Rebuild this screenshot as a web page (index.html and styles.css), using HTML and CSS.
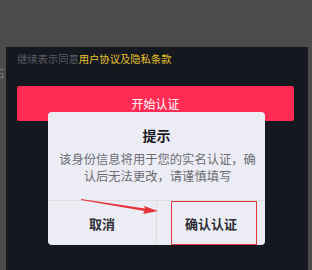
FILE: index.html
```html
<!DOCTYPE html>
<html lang="zh-CN">
<head>
  <meta charset="UTF-8" />
  <title>实名认证</title>
  <link rel="stylesheet" href="styles.css">
</head>
<body>

<div class="page">
  <span class="behind">占</span>

  <!-- bottom sheet -->
  <div class="sheet">
    <div class="agree">继续表示同意<span class="link">用户协议及隐私条款</span></div>
    <button class="btn-start">开始认证</button>
  </div>

  <!-- confirm dialog -->
  <div class="dialog">
    <div class="dialog-title">提示</div>
    <div class="dialog-text">该身份信息将用于您的实名认证，确认后无法更改，请谨慎填写</div>
    <div class="dialog-actions">
      <div class="action">取消</div>
      <div class="action">确认认证</div>
    </div>
  </div>

  <!-- annotation -->
  <div class="mark-box"></div>
  <svg class="mark-arrow" width="80" height="16" viewBox="0 0 80 16">
    <polygon points="0,0 64,9.5 63,7 77,12 62,15 63.5,12 0,1" fill="#e8323a" />
  </svg>
</div>

</body>
</html>
```

FILE: styles.css
```css
* { box-sizing: border-box; }
body {
  margin: 0;
  background: #4b4b4b;
  font-family: "Noto Sans CJK SC", "Noto Sans", sans-serif;
}
.page {
  position: relative;
  width: 312px;
  height: 270px;
  overflow: hidden;
  padding-top: 47px;
}
.behind {
  position: absolute;
  left: -7px;
  top: 64px;
  font-size: 12px;
  color: #7a7a7a;
}
.sheet {
  margin-left: 6px;
  width: 302px;
  height: 223px;
  background: #161820;
  padding: 4px 0 0 11px;
}
.agree {
  font-size: 10.3px;
  line-height: 15px;
  color: #5a5c65;
}
.agree .link { color: #e6c12d; }
.btn-start {
  display: block;
  margin-top: 20px;
  width: 277px;
  height: 35px;
  border: none;
  border-radius: 2px;
  background: #fe2c55;
  color: #fff;
  font-family: inherit;
  font-size: 12px;
  padding: 0;
}
.dialog {
  position: absolute;
  left: 48px;
  top: 112px;
  width: 217px;
  height: 133px;
  background: #ececf4;
  border-radius: 4px;
  display: flex;
  flex-direction: column;
}
.dialog-title {
  text-align: center;
  font-size: 14px;
  font-weight: bold;
  color: #1b1b1f;
  line-height: 20px;
  margin-top: 13px;
}
.dialog-text {
  padding: 6px 8px 0 10px;
  font-size: 12.3px;
  line-height: 16.5px;
  color: #6c6c72;
  text-align: center;
  height: 55px;
}
.dialog-actions {
  flex: 1;
  display: flex;
  border-top: 1px solid #dcdce3;
}
.action {
  flex: 1;
  display: flex;
  align-items: center;
  justify-content: center;
  font-size: 13px;
  font-weight: bold;
  color: #2d2d33;
}
.action + .action { border-left: 1px solid #dcdce3; }
.mark-box {
  position: absolute;
  left: 171px;
  top: 201px;
  width: 86px;
  height: 44px;
  border: 1.5px solid #e23a3f;
}
.mark-arrow {
  position: absolute;
  left: 81px;
  top: 199px;
}
```
